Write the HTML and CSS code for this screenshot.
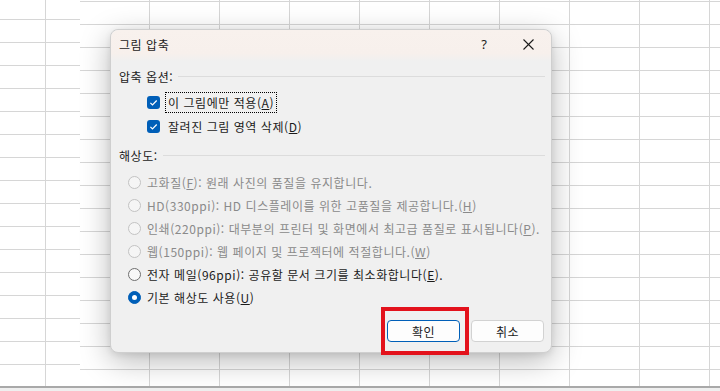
FILE: index.html
```html
<!DOCTYPE html>
<html lang="ko">
<head>
  <meta charset="utf-8">
  <meta name="viewport" content="width=device-width, initial-scale=1.0">
  <title>그림 압축</title>
  <link rel="stylesheet" href="styles.css">
</head>
<body>
  <div class="sheet">
    <div class="pane pane-left"></div>
    <div class="pane pane-main"></div>
  </div>
  <div class="status-bar"></div>

  <div class="dialog">
    <div class="dialog-title">
      <span class="title-text">그림 압축</span>
      <div class="title-buttons">
        <span class="help-btn">?</span>
        <svg class="close-btn" width="11" height="11" viewBox="0 0 11 11" fill="none" stroke="#1a1a1a" stroke-width="1.1">
          <line x1="0.5" y1="0.5" x2="10.5" y2="10.5"></line>
          <line x1="10.5" y1="0.5" x2="0.5" y2="10.5"></line>
        </svg>
      </div>
    </div>

    <div class="dialog-body">
      <div class="group-heading">
        <span>압축 옵션:</span>
        <div class="group-line"></div>
      </div>
      <div class="option-row check-row">
        <svg class="checkbox" width="13" height="13" viewBox="0 0 13 13">
          <rect x="0" y="0" width="13" height="13" rx="3" fill="#005fb8"></rect>
          <path d="M3.4 6.8 L5.5 8.9 L9.7 4.5" fill="none" stroke="#ffffff" stroke-width="1.2"></path>
        </svg>
        <span class="label focused">이 그림에만 적용(<u>A</u>)</span>
      </div>
      <div class="option-row check-row">
        <svg class="checkbox" width="13" height="13" viewBox="0 0 13 13">
          <rect x="0" y="0" width="13" height="13" rx="3" fill="#005fb8"></rect>
          <path d="M3.4 6.8 L5.5 8.9 L9.7 4.5" fill="none" stroke="#ffffff" stroke-width="1.2"></path>
        </svg>
        <span class="label">잘려진 그림 영역 삭제(<u>D</u>)</span>
      </div>

      <div class="group-heading second">
        <span>해상도:</span>
        <div class="group-line"></div>
      </div>
      <div class="option-row radio-row disabled">
        <span class="radio"></span>
        <span class="label">고화질(<u>F</u>): 원래 사진의 품질을 유지합니다.</span>
      </div>
      <div class="option-row radio-row disabled">
        <span class="radio"></span>
        <span class="label">HD(330ppi): HD 디스플레이를 위한 고품질을 제공합니다.(<u>H</u>)</span>
      </div>
      <div class="option-row radio-row disabled">
        <span class="radio"></span>
        <span class="label">인쇄(220ppi): 대부분의 프린터 및 화면에서 최고급 품질로 표시됩니다(<u>P</u>).</span>
      </div>
      <div class="option-row radio-row disabled">
        <span class="radio"></span>
        <span class="label">웹(150ppi): 웹 페이지 및 프로젝터에 적절합니다.(<u>W</u>)</span>
      </div>
      <div class="option-row radio-row">
        <span class="radio"></span>
        <span class="label">전자 메일(96ppi): 공유할 문서 크기를 최소화합니다(<u>E</u>).</span>
      </div>
      <div class="option-row radio-row">
        <span class="radio selected"></span>
        <span class="label">기본 해상도 사용(<u>U</u>)</span>
      </div>
    </div>

    <div class="dialog-footer">
      <button class="btn btn-default">확인</button>
      <button class="btn">취소</button>
    </div>
  </div>

  <div class="highlight-box"></div>
</body>
</html>
```

FILE: styles.css
```css
:root {
  --text: #1b1b1b;
  --muted: #8a8a8a;
  --accent: #005fb8;
  --grid: #d6d6d6;
  --line: #dcdcdc;
}

* {
  margin: 0;
  padding: 0;
  box-sizing: border-box;
}

body {
  width: 720px;
  height: 391px;
  overflow: hidden;
  position: relative;
  font-family: "Noto Sans CJK KR", "Noto Sans", sans-serif;
  font-size: 12px;
  letter-spacing: 0.55px;
  color: var(--text);
  background: #ffffff;
}

/* spreadsheet behind the dialog */
.sheet {
  display: flex;
  height: 386px;
}

.pane {
  height: 100%;
  background-color: #ffffff;
}

.pane-left {
  width: 80px;
  background-image:
    linear-gradient(to right, transparent 45px, var(--grid) 45px, var(--grid) 46px, transparent 46px),
    linear-gradient(to bottom, transparent 19px, var(--grid) 19px, var(--grid) 20px, transparent 20px);
  background-size: 100% 100%, 100% 23px;
  background-repeat: no-repeat, repeat;
}

.pane-main {
  flex: 1;
  background-image:
    linear-gradient(to right, transparent 69px, var(--grid) 69px, var(--grid) 70px, transparent 70px),
    linear-gradient(to bottom, transparent 1px, var(--grid) 1px, var(--grid) 2px, transparent 2px);
  background-size: 70px 100%, 100% 23px;
}

.status-bar {
  height: 5px;
  border-top: 2px solid #a9a9a9;
  background: #efefef;
}

/* dialog */
.dialog {
  position: absolute;
  left: 110px;
  top: 29px;
  width: 442px;
  height: 324px;
  background: #f0f0f0;
  border: 1px solid #cfcfcf;
  border-radius: 8px;
  box-shadow: 0 8px 30px rgba(0, 0, 0, 0.28), 0 2px 6px rgba(0, 0, 0, 0.08);
  display: flex;
  flex-direction: column;
}

.dialog-title {
  height: 31px;
  display: flex;
  align-items: center;
  justify-content: space-between;
  padding: 0 17px 0 8px;
  background: linear-gradient(to bottom, #f8f1ed 0%, #f7f0ec 75%, #f0f0f0 100%);
  border-radius: 8px 8px 0 0;
}

.title-text {
  font-size: 12px;
  padding-bottom: 3px;
}

.title-buttons {
  display: flex;
  align-items: center;
  gap: 36px;
  padding-bottom: 3px;
}

.help-btn {
  font-family: "Noto Sans", sans-serif;
  font-size: 13px;
  letter-spacing: 0;
}

.dialog-body {
  flex: 1;
  padding: 7px 6px 0 8px;
}

.group-heading {
  display: flex;
  align-items: center;
  height: 16px;
  margin-bottom: 6px;
}

.group-heading.second {
  margin-top: 9px;
  margin-bottom: 8px;
}

.group-line {
  flex: 1;
  margin-left: 5px;
  border-top: 1px solid var(--line);
}

.option-row {
  display: flex;
  align-items: center;
  white-space: nowrap;
}

.check-row {
  height: 24px;
  padding-left: 28px;
  gap: 5px;
}

.check-row .label {
  padding: 1px 2px;
  border: 1px dotted transparent;
}

.check-row .label.focused {
  border-color: #000000;
}

.radio-row {
  height: 23px;
  padding-left: 9px;
  gap: 6px;
}

.radio-row.disabled .label {
  color: var(--muted);
}

.radio {
  width: 13px;
  height: 13px;
  border-radius: 50%;
  border: 1px solid #6f6f6f;
  background: #f7f7f7;
  position: relative;
  flex-shrink: 0;
}

.disabled .radio {
  border-color: #c3c3c3;
  background: #f5f5f5;
}

.radio.selected {
  border-color: var(--accent);
  background: var(--accent);
}

.radio.selected::after {
  content: "";
  position: absolute;
  left: 3px;
  top: 3px;
  width: 5px;
  height: 5px;
  border-radius: 50%;
  background: #ffffff;
}

.dialog-footer {
  display: flex;
  justify-content: flex-end;
  gap: 11px;
  padding: 0 7px 10px 0;
}

.btn {
  width: 73px;
  height: 22px;
  font-family: inherit;
  font-size: 12px;
  letter-spacing: 0.55px;
  color: var(--text);
  background: #fdfdfd;
  border: 1px solid #d2d2d2;
  border-radius: 4px;
}

.btn-default {
  border-color: var(--accent);
}

/* red annotation over the OK button */
.highlight-box {
  position: absolute;
  left: 381px;
  top: 307px;
  width: 88px;
  height: 48px;
  border: 4px solid #e3121c;
}
```
